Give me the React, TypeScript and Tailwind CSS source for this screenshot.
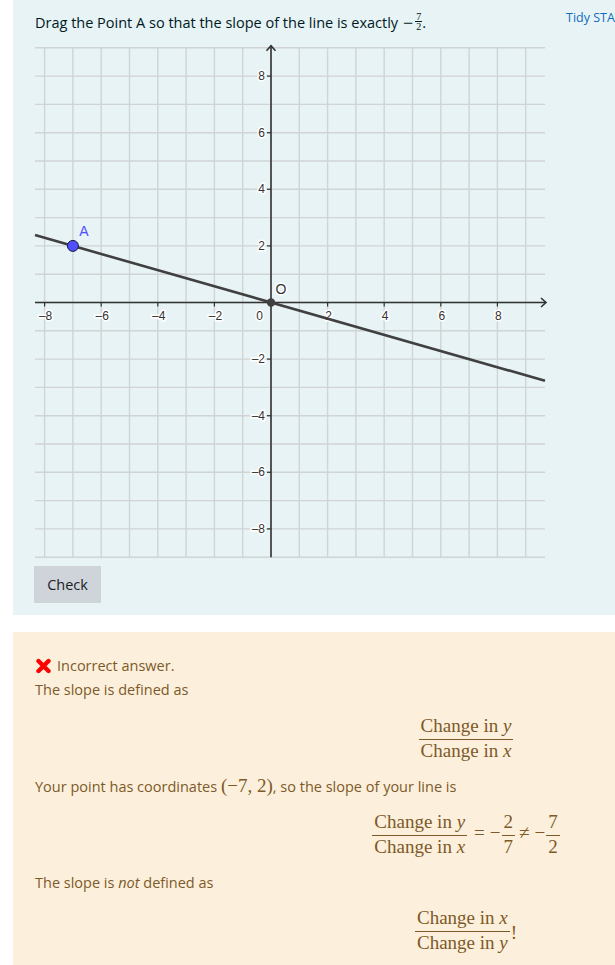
import React from "react";

const U = 28.3;
const OX = 241;
const OY = 261.5;
const px = (v: number) => OX + v * U;
const py = (v: number) => OY - v * U;

const Graph = () => {
    const xs = Array.from({ length: 18 }, (_, i) => i - 8);
    const ys = Array.from({ length: 19 }, (_, i) => i - 9);
    const left = 5;
    const right = 515;
    const top = py(9);
    const bottom = py(-9);
    const xLabels = [-8, -6, -4, -2, 2, 4, 6, 8];
    const lx0 = (left - OX) / U;
    const lx1 = (right - OX) / U;
    const halo = { paintOrder: "stroke" as const };

    return (
        <svg width="520" height="520" viewBox="0 0 520 520" className="block" style={{ fontFamily: "'Liberation Sans', Arial, sans-serif" }}>
            {/* grid */}
            {xs.map((v) => (
                <line key={"gx" + v} x1={px(v)} y1={top} x2={px(v)} y2={bottom} stroke="#d0d4d5" strokeWidth="1.4" />
            ))}
            {ys.map((v) => (
                <line key={"gy" + v} x1={left} y1={py(v)} x2={right} y2={py(v)} stroke="#d0d4d5" strokeWidth="1.4" />
            ))}

            {/* axes */}
            <line x1={left} y1={OY} x2={right + 1} y2={OY} stroke="#333" strokeWidth="1.6" />
            <polyline points={`${right - 4},${OY - 4.5} ${right + 1},${OY} ${right - 4},${OY + 4.5}`} fill="none" stroke="#333" strokeWidth="1.6" />
            <line x1={OX} y1={bottom} x2={OX} y2={top - 2} stroke="#333" strokeWidth="1.6" />
            <polyline points={`${OX - 4.5},${top + 3} ${OX},${top - 2} ${OX + 4.5},${top + 3}`} fill="none" stroke="#333" strokeWidth="1.6" />

            {/* ticks + labels */}
            {xLabels.map((v) => (
                <g key={"xl" + v}>
                    <line x1={px(v)} y1={OY} x2={px(v)} y2={OY + 4} stroke="#333" strokeWidth="1.2" />
                    <text x={px(v) + 1} y={OY + 13} fontSize="12" fill="#333" textAnchor="middle" dominantBaseline="central" stroke="#fff" strokeWidth="3" style={halo}>
                        {v < 0 ? "\u2013" + -v : v}
                    </text>
                </g>
            ))}
            {xLabels.map((v) => (
                <g key={"yl" + v}>
                    <line x1={OX - 4} y1={py(v)} x2={OX} y2={py(v)} stroke="#333" strokeWidth="1.2" />
                    <text x={OX - 6} y={py(v)} fontSize="12" fill="#333" textAnchor="end" dominantBaseline="central" stroke="#fff" strokeWidth="3" style={halo}>
                        {v < 0 ? "\u2013" + -v : v}
                    </text>
                </g>
            ))}
            <text x={OX - 8} y={OY + 13} fontSize="12" fill="#333" textAnchor="end" dominantBaseline="central" stroke="#fff" strokeWidth="3" style={halo}>
                0
            </text>

            {/* line through O and A */}
            <line x1={left} y1={py((-2 / 7) * lx0)} x2={right} y2={py((-2 / 7) * lx1)} stroke="#404040" strokeWidth="2.6" />

            {/* O */}
            <circle cx={OX} cy={OY} r="4.2" fill="#404040" />
            <text x={OX + 10} y={OY - 14} fontSize="14" fill="#333" textAnchor="middle" dominantBaseline="central" stroke="#fff" strokeWidth="3" style={halo}>
                O
            </text>

            {/* A */}
            <circle cx={px(-7)} cy={py(2)} r="5.5" fill="#4f4fff" stroke="#1a1a40" strokeWidth="1" />
            <text x={px(-7) + 11} y={py(2) - 15} fontSize="14" fill="#4f4fff" textAnchor="middle" dominantBaseline="central">
                A
            </text>
        </svg>
    );
};

const Frac = ({ num, den }: { num: React.ReactNode; den: React.ReactNode }) => (
    <span className="inline-flex flex-col items-center">
        <span className="px-[2px] leading-[20px] pb-[3px]">{num}</span>
        <span className="w-full h-px bg-[#7d5a29]"></span>
        <span className="px-[2px] leading-[20px] pt-[1px]">{den}</span>
    </span>
);

const V = ({ c }: { c: string }) => <i>{c}</i>;

const MathRow = ({ children }: { children: React.ReactNode }) => (
    <div className="w-[862px] flex justify-center items-center font-['Liberation_Serif',serif] text-[19px]">{children}</div>
);

const CrossIcon = () => (
    <svg width="17" height="16" viewBox="0 0 17 16" className="inline-block mr-[5px]">
        <path d="M3.5 3 L13.5 13 M13.5 3 L3.5 13" stroke="#ff0000" strokeWidth="4.4" strokeLinecap="round" />
    </svg>
);

export default function App() {
    return (
        <div className="w-[615px] h-[965px] overflow-hidden bg-white font-['Open_Sans',sans-serif] text-[14.5px]">
            {/* question formulation */}
            <div className="ml-[13px] w-[900px] bg-[#e7f3f5] text-[#001a1e] pt-[12px] pb-[12px]">
                <div className="flex">
                    <div className="w-[553px] shrink-0 pl-[22px] leading-[20px] flex items-center">
                        <span>Drag the Point A so that the slope of the line is exactly</span>
                        <span className="ml-[5px] font-['Liberation_Serif',serif] text-[18px]">−</span>
                        <span className="inline-flex flex-col items-center font-['Liberation_Serif',serif] text-[10px] leading-[9px] ml-[2px] mb-[2px]">
                            <span>7</span>
                            <span className="w-[7px] h-px bg-[#001a1e]"></span>
                            <span>2</span>
                        </span>
                        <span>.</span>
                    </div>
                    <a className="text-[12.5px] text-[#0f6cbf] leading-[12px] whitespace-nowrap">Tidy STACK question</a>
                </div>
                <div className="mt-[8px] ml-[17px]">
                    <Graph />
                </div>
                <button className="mt-[5px] ml-[21px] h-[37px] w-[67px] bg-[#ced4da] text-[#1d2125] text-[14.5px]">Check</button>
            </div>

            {/* feedback */}
            <div className="ml-[13px] mt-[17px] w-[900px] h-[400px] bg-[#fcefdc] text-[#7d5a29] pt-[22px] pl-[22px]">
                <div className="flex items-center leading-[24px]">
                    <CrossIcon />
                    <span>Incorrect answer.</span>
                </div>
                <p className="leading-[24px]">The slope is defined as</p>
                <div className="mt-[14px]">
                    <MathRow>
                        <Frac num={<>Change in <V c="y" /></>} den={<>Change in <V c="x" /></>} />
                    </MathRow>
                </div>
                <p className="mt-[13px] leading-[24px]">
                    Your point has coordinates <span className="font-['Liberation_Serif',serif] text-[19px]">(−7, 2)</span>, so the slope of your line is
                </p>
                <div className="mt-[13px]">
                    <MathRow>
                        <Frac num={<>Change in <V c="y" /></>} den={<>Change in <V c="x" /></>} />
                        <span className="mb-[3px] ml-[7px] mr-[5px]">=</span>
                        <span className="mb-[3px] mr-[1px]">−</span>
                        <Frac num="2" den="7" />
                        <span className="mb-[3px] ml-[4px] mr-[5px]">≠</span>
                        <span className="mb-[3px] mr-[1px]">−</span>
                        <Frac num="7" den="2" />
                    </MathRow>
                </div>
                <p className="mt-[14px] leading-[24px]">
                    The slope is <i>not</i> defined as
                </p>
                <div className="mt-[13px]">
                    <MathRow>
                        <Frac num={<>Change in <V c="x" /></>} den={<>Change in <V c="y" /></>} />
                        <span className="mt-[6px] ml-[1px]">!</span>
                    </MathRow>
                </div>
            </div>
        </div>
    );
}
